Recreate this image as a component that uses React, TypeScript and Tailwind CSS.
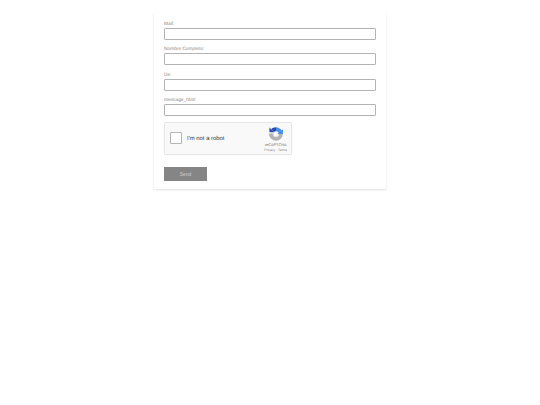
const fields = ['Mail:', 'Nombre Completo:', 'De:', 'message_html']

function RecaptchaLogo() {
  return (
    <svg width="14" height="14" viewBox="0 0 32 32" fill="none">
      {/* bottom half, grey */}
      <path d="M5 16a11 11 0 0 0 22 0" stroke="#b4b4b4" strokeWidth="9" />
      <path d="M0 15h11l-4 5H1z" fill="#b4b4b4" />
      {/* top left, dark blue */}
      <path d="M8 8a11 11 0 0 1 8-3" stroke="#2a4ab0" strokeWidth="9" />
      <path d="M1 1v11h11z" fill="#2a4ab0" />
      {/* top right, light blue */}
      <path d="M16 5a11 11 0 0 1 11 11" stroke="#4a90e2" strokeWidth="9" />
      <path d="M19 16h13V5z" fill="#4a90e2" />
    </svg>
  )
}

export default function App() {
  return (
    <div className="min-h-[405px] bg-white pt-[13px] font-['Liberation_Sans',Arial,sans-serif] antialiased [text-rendering:geometricPrecision]">
      <div className="mx-auto w-[232px] bg-white px-[10px] pb-2 pt-[8px] shadow-[0_1px_2px_rgba(0,0,0,0.12)]">
        <form className="flex flex-col">
          {fields.map((label) => (
            <div key={label} className="mb-[6.300px] flex flex-col">
              <label className="h-[7px] pt-px text-[4.800px] leading-[5px] text-[#888888]">{label}</label>
              <input
                type="text"
                className="h-[12px] w-full shrink-0 rounded-[1px] border border-[#b4b4b4] bg-white"
              />
            </div>
          ))}
          <div className="flex h-[32.500px] w-[128px] items-center rounded-[1.500px] border border-[#e6e6e6] bg-[#f9f9f9] pl-[5px] pr-[4px] shadow-[0_0_1px_rgba(0,0,0,0.08)]">
            <div className="h-[12px] w-[12px] rounded-[1px] border border-[#b4b4b4] bg-white" />
            <span className="ml-[5px] pt-[2px] text-[5.900px] text-[#333333]">I'm not a robot</span>
            <div className="ml-auto flex flex-col items-center pt-[2px]">
              <RecaptchaLogo />
              <span className="mt-[2px] text-[3.800px] leading-[4px] text-[#666666]">reCAPTCHA</span>
              <span className="mt-[1px] text-[3.300px] leading-[4px] text-[#808080]">Privacy - Terms</span>
            </div>
          </div>
          <button
            type="button"
            className="mt-[12.500px] h-[14px] w-[43px] bg-[#858585] pt-px text-[5px] text-[#cfcfcf]"
          >
            Send
          </button>
        </form>
      </div>
    </div>
  )
}
